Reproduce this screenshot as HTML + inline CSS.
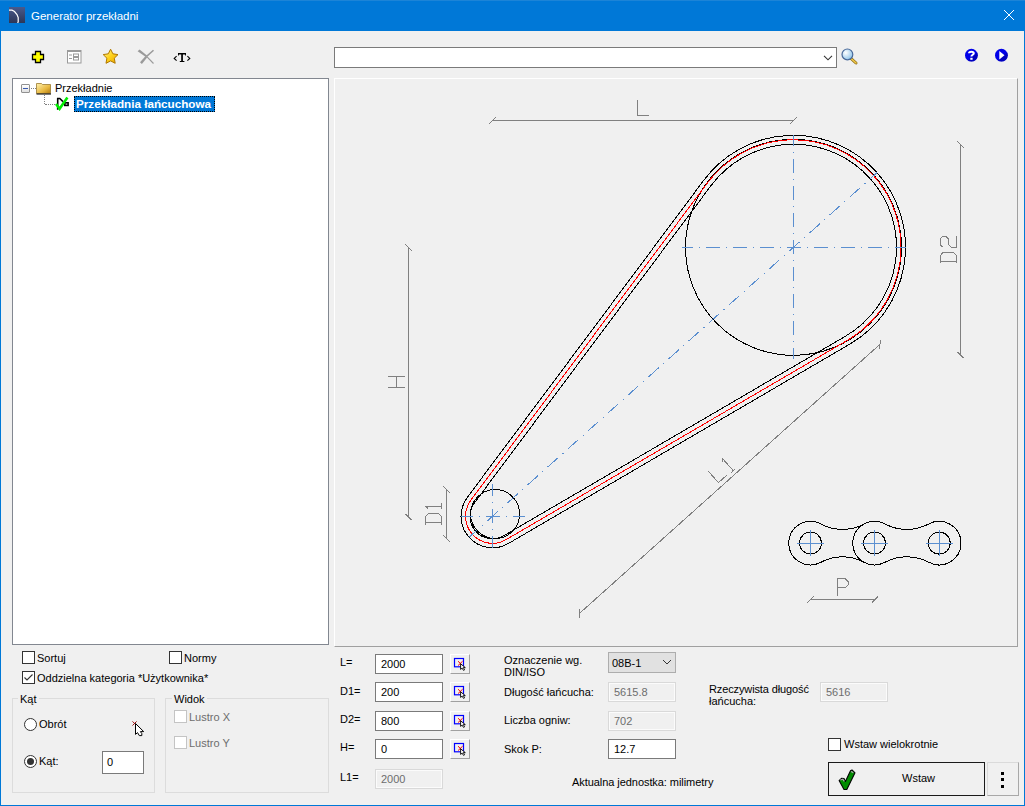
<!DOCTYPE html>
<html><head><meta charset="utf-8">
<style>
*{margin:0;padding:0;box-sizing:border-box}
html,body{width:1025px;height:806px;overflow:hidden;background:#f0f0f0}
body{position:relative;font-family:"Liberation Sans",sans-serif;font-size:11px;color:#000}
.a{position:absolute}
.t{position:absolute;font-size:11px;line-height:13px;white-space:nowrap}
.inp{position:absolute;background:#fff;border:1px solid #7a7a7a}
.dis{position:absolute;background:#f0f0f0;border:1px solid #d9d9d9}
.dis::after{content:"";position:absolute;left:0;top:0;right:0;bottom:0;border:1px solid #fbfbfb}
.cb{position:absolute;width:13px;height:13px;background:#fff;border:1px solid #333}
.pick{position:absolute;width:20px;height:20px;background:#f0f0f0;border:1px solid #fff;border-right-color:#a0a0a0;border-bottom-color:#a0a0a0}
.gray{color:#6d6d6d}
</style></head><body>
<!-- window frame -->
<div class="a" style="left:0;top:0;width:1025px;height:806px;border:1px solid #0078d7;border-top:none"></div>
<div class="a" style="left:0;top:0;width:1025px;height:31px;background:#0078d7"></div>
<div class="a" style="left:0;top:0;width:1025px;height:1px;background:#1c84d7"></div>
<!-- app icon -->
<svg class="a" style="left:9px;top:7px" width="16" height="16" viewBox="0 0 16 16">
<defs><linearGradient id="ig" x1="0" y1="0" x2="0" y2="1"><stop offset="0" stop-color="#4a5a8c"/><stop offset="1" stop-color="#2c3657"/></linearGradient></defs>
<rect width="16" height="16" fill="url(#ig)"/>
<path d="M0,3.2H3L5.5,4.5L8,7.5L9.2,10.5V15L8.5,15.8" fill="none" stroke="#fff" stroke-width="1.2"/>
</svg>
<div class="t" style="left:31px;top:9px;font-size:11.5px;line-height:14px;color:#fff">Generator przekładni</div>
<svg class="a" style="left:1003px;top:9px" width="12" height="12" viewBox="0 0 12 12"><path d="M1,1L11,11M11,1L1,11" stroke="#fff" stroke-width="1"/></svg>

<!-- toolbar -->
<svg class="a" style="left:31px;top:50px" width="15" height="15" viewBox="0 0 15 15">
<path d="M4.5,1.5H9.5V4.5H12.5V9.5H9.5V12.5H4.5V9.5H1.5V4.5H4.5Z" fill="#ffff00" stroke="#000" stroke-width="1.3"/>
</svg>
<svg class="a" style="left:67px;top:50px" width="15" height="14" viewBox="0 0 15 14">
<rect x="0.5" y="0.5" width="13.5" height="12.5" fill="#fff" stroke="#9a9a9a"/>
<rect x="0.5" y="0.5" width="13.5" height="1.5" fill="#9a9a9a"/>
<path d="M2,5H5M2,8.5H5" stroke="#9a9a9a"/>
<rect x="6.5" y="4" width="5" height="2.5" fill="none" stroke="#9a9a9a"/>
<rect x="6.5" y="7.5" width="5" height="2.5" fill="none" stroke="#9a9a9a"/>
</svg>
<svg class="a" style="left:102px;top:48px" width="18" height="17" viewBox="0 0 18 17">
<defs><linearGradient id="sg" x1="0" y1="0" x2="1" y2="1"><stop offset="0" stop-color="#fff7a0"/><stop offset="0.5" stop-color="#ffd21a"/><stop offset="1" stop-color="#e8a000"/></linearGradient></defs>
<path d="M8.6,1.2L10.9,5.8L16.0,6.6L12.3,10.2L13.2,15.3L8.6,12.9L4.0,15.3L4.9,10.2L1.2,6.6L6.3,5.8Z" fill="url(#sg)" stroke="#b07800" stroke-width="1"/>
</svg>
<svg class="a" style="left:137px;top:49px" width="18" height="16" viewBox="0 0 18 16">
<path d="M0.6,2.2L2.6,0.6L10.3,6.7L8.9,8.1Z" fill="#9a9a9a"/>
<path d="M3,13.2L4.9,15L10.3,8.2L8.8,6.7Z" fill="#9a9a9a"/>
<path d="M9.6,7.4L16.5,1.3" stroke="#9a9a9a" stroke-width="1.5"/>
<path d="M9.6,7.4L16.5,14.5" stroke="#9a9a9a" stroke-width="1.1"/>
</svg>
<svg class="a" style="left:172px;top:50px" width="20" height="14" viewBox="0 0 20 14">
<path d="M4.6,6.1L2.2,8.4L4.6,10.7M15.4,6.1L17.8,8.4L15.4,10.7" fill="none" stroke="#000" stroke-width="1.1"/>
<path d="M6,3H14V5.6H13.1V4.6H10.9V11.1H12.4V12H7.8V11.1H9.2V4.6H6.9V5.6H6Z" fill="#000"/>
</svg>

<div class="inp" style="left:334px;top:47px;width:503px;height:21px"></div>
<svg class="a" style="left:823px;top:55px" width="10" height="6" viewBox="0 0 10 6"><path d="M1,0.8L5,4.8L9,0.8" fill="none" stroke="#333" stroke-width="1.1"/></svg>
<svg class="a" style="left:840px;top:47px" width="19" height="19" viewBox="0 0 19 19">
<defs><radialGradient id="mg" cx="0.35" cy="0.35" r="0.7"><stop offset="0" stop-color="#ffffff"/><stop offset="1" stop-color="#8ec4ea"/></radialGradient></defs>
<path d="M11,11.5L16,16" stroke="#8a6a10" stroke-width="3" stroke-linecap="round"/>
<path d="M11,11.5L16,16" stroke="#f2c94c" stroke-width="1.6" stroke-linecap="round"/>
<circle cx="7.4" cy="7.4" r="5.4" fill="url(#mg)" stroke="#4a6a9a" stroke-width="1.2"/>
</svg>
<svg class="a" style="left:964px;top:48px" width="15" height="15" viewBox="0 0 15 15">
<circle cx="7.4" cy="7.2" r="6.4" fill="#0000e8"/><path d="M7.4,13.6A6.4,6.4 0 0 0 13.2,4.5L4,12.5Z" fill="#0000a0" opacity="0.6"/>
<path d="M5,5.2C5,3.2 9.8,3.2 9.8,5.2C9.8,6.8 7.4,6.8 7.4,8.6" fill="none" stroke="#fff" stroke-width="2"/>
<rect x="6.3" y="9.8" width="2.3" height="2" fill="#fff"/>
</svg>
<svg class="a" style="left:994px;top:48px" width="15" height="15" viewBox="0 0 15 15">
<circle cx="7.4" cy="7.2" r="6.4" fill="#0000e8"/><path d="M7.4,13.6A6.4,6.4 0 0 0 13.2,4.5L4,12.5Z" fill="#0000a0" opacity="0.6"/>
<path d="M5.3,3L10.5,7.2L5.3,11.4Z" fill="#fff"/>
</svg>

<!-- tree -->
<div class="a" style="left:12px;top:78px;width:317px;height:567px;background:#fff;border:1px solid #828790"></div>
<div class="a" style="left:21px;top:84px;width:9px;height:9px;border:1px solid #919191;border-radius:1px;background:linear-gradient(#fff,#e0e0e0)"></div>
<div class="a" style="left:23px;top:88px;width:5px;height:1px;background:#3a5ab0"></div>
<div class="a" style="left:31px;top:88px;width:5px;height:0;border-top:1px dotted #808080"></div>
<div class="a" style="left:44px;top:95px;width:0;height:9px;border-left:1px dotted #808080"></div>
<div class="a" style="left:45px;top:104px;width:10px;height:0;border-top:1px dotted #808080"></div>
<svg class="a" style="left:36px;top:82px" width="16" height="13" viewBox="0 0 16 13">
<defs><linearGradient id="fg" x1="0" y1="0" x2="1" y2="1"><stop offset="0" stop-color="#fff2b0"/><stop offset="0.6" stop-color="#e8b840"/><stop offset="1" stop-color="#b07a10"/></linearGradient></defs>
<path d="M0.5,1.5H5.5L6.5,2.5H14.5V11.5H0.5Z" fill="url(#fg)" stroke="#9a7a30" stroke-width="0.8"/>
<path d="M0.5,12H15" stroke="#222" stroke-width="1.2"/>
</svg>
<div class="t" style="left:55px;top:82px">Przekładnie</div>
<svg class="a" style="left:55px;top:96px" width="16" height="15" viewBox="0 0 16 15">
<path d="M2.7,2.3V13.8M2,2.5H4.8L8,5.6" fill="none" stroke="#000" stroke-width="1.6"/>
<rect x="9.8" y="6.8" width="3.3" height="2.6" fill="#fff" stroke="#000" stroke-width="1.6"/>
<path d="M1,7.9L4.6,12.8L12.4,1.6" fill="none" stroke="#00ee00" stroke-width="2.6"/>
</svg>
<div class="a" style="left:74px;top:96px;width:141px;height:16px;background:#0078d7;outline:1px dotted #000;outline-offset:-1px;border:1px dotted #ff9a2a"></div>
<div class="t" style="left:76px;top:97px;font-weight:bold;font-size:11.7px;line-height:14px;color:#fff">Przekładnia łańcuchowa</div>

<!-- drawing area -->
<div class="a" style="left:334px;top:78px;width:684px;height:569px;border:1px solid #fff;border-right-color:#a0a0a0;border-bottom-color:#a0a0a0"></div>
<svg width="1025" height="806" viewBox="0 0 1025 806" style="position:absolute;left:0;top:0" shape-rendering="crispEdges"><circle cx="495.1" cy="514" r="24.5" fill="none" stroke="#000"/>
<circle cx="793.5" cy="247.3" r="108" fill="none" stroke="#000"/>
<path d="M467.25,497.47 A31.5,31.5 0 0 0 508.39,543.50 L849.98,344.02 A112,112 0 1 0 703.71,180.35 Z" fill="none" stroke="#000"/>
<path d="M474.46,502.85 A22.5,22.5 0 0 0 503.85,535.73 L845.44,336.24 A103,103 0 1 0 710.93,185.73 Z" fill="none" stroke="#000"/>
<path d="M470.86,500.16 A27,27 0 0 0 506.12,539.62 L847.71,340.13 A107.5,107.5 0 1 0 707.32,183.04 Z" fill="none" stroke="#f00"/>
<line x1="460.50" y1="516.30" x2="524.50" y2="516.30" stroke="#5b8fd0" stroke-dasharray="14 6 1 6" stroke-dashoffset="2"/>
<line x1="492.50" y1="484.30" x2="492.50" y2="548.30" stroke="#5b8fd0" stroke-dasharray="14 6 1 6" stroke-dashoffset="2"/>
<line x1="681.50" y1="247.30" x2="905.50" y2="247.30" stroke="#5b8fd0" stroke-dasharray="14 6 1 6" stroke-dashoffset="3"/>
<line x1="793.50" y1="135.30" x2="793.50" y2="359.30" stroke="#5b8fd0" stroke-dasharray="14 6 1 6" stroke-dashoffset="3"/>
<line x1="469.39" y1="536.96" x2="877.01" y2="172.67" stroke="#5b8fd0" stroke-dasharray="14 6 1 6" stroke-dashoffset="3"/>
<g stroke="#808080" fill="none"><line x1="492.50" y1="120.50" x2="793.50" y2="120.50"/><line x1="489.39" y1="123.61" x2="495.61" y2="117.39"/><line x1="790.39" y1="123.61" x2="796.61" y2="117.39"/><line x1="960.50" y1="144.50" x2="960.50" y2="355.00"/><line x1="957.39" y1="141.39" x2="963.61" y2="147.61"/><line x1="957.39" y1="351.89" x2="963.61" y2="358.11"/><line x1="408.50" y1="247.40" x2="408.50" y2="516.90"/><line x1="405.39" y1="244.29" x2="411.61" y2="250.51"/><line x1="405.39" y1="513.79" x2="411.61" y2="520.01"/><line x1="446.50" y1="489.50" x2="446.50" y2="538.40"/><line x1="443.39" y1="486.39" x2="449.61" y2="492.61"/><line x1="443.39" y1="535.29" x2="449.61" y2="541.51"/><line x1="579.50" y1="613.40" x2="880.00" y2="344.30"/><line x1="579.26" y1="617.79" x2="579.74" y2="609.01"/><line x1="879.76" y1="348.69" x2="880.24" y2="339.91"/><line x1="810.50" y1="599.50" x2="875.00" y2="599.50"/><line x1="807.39" y1="602.61" x2="813.61" y2="596.39"/><line x1="871.89" y1="602.61" x2="878.11" y2="596.39"/><g transform="translate(637.5,100) rotate(0)"><path transform="translate(0,0)" d="M0,0V15.6H11.7"/></g><g transform="translate(940.2,263.4) rotate(-90)"><path transform="translate(0,0)" d="M0,0H7.6L10.8,2.7V13.6L7.8,16.5H0M2.2,0V16.5"/><path transform="translate(15.8,0)" d="M0.3,2.4L2.8,0.2H8.4L11.2,2.1V5.5L8.4,8.3H3.1L0.3,11.4V16.7H11.5"/></g><g transform="translate(387.9,387.4) rotate(-90)"><path transform="translate(0,0)" d="M0,0V16.9M11,0V16.9M0,8.7H11"/></g><g transform="translate(425.2,524.7) rotate(-90)"><path transform="translate(0,0)" d="M0,0H7.6L10.8,2.7V13.6L7.8,16.5H0M2.2,0V16.5"/><path transform="translate(16.1,0)" d="M2.6,0V16.5M0,16.5H5.6M2.6,0L0,3"/></g><g transform="translate(708.1,471) rotate(-41.84)"><path transform="translate(0,0)" d="M0,0V15.6H11.7"/><path transform="translate(16.4,0)" d="M2.6,0V16.5M0,16.5H5.6M2.6,0L0,3"/></g><g transform="translate(837.3,578.8) rotate(0)"><path transform="translate(0,0)" d="M0,16.8V0H7.9L11.4,3.5V5.7L7.9,8.8H0"/></g></g>
<path d="M820.87,523.93 A45.46,45.46 0 0 0 864.13,523.93 A21.8,21.8 0 1 1 864.13,562.27 A45.46,45.46 0 0 0 820.87,562.27 A21.8,21.8 0 1 1 820.87,523.93 Z" fill="#f0f0f0" stroke="#000"/><path d="M884.77,523.87 A46.85,46.85 0 0 0 928.93,523.87 A21.8,21.8 0 1 1 928.93,562.33 A46.85,46.85 0 0 0 884.77,562.33 A21.8,21.8 0 1 1 884.77,523.87 Z" fill="#f0f0f0" stroke="#000"/><circle cx="810.5" cy="543.1" r="11" fill="none" stroke="#000"/><path d="M797.0,543.1H824.0M810.5,530.4V555.8000000000001" stroke="#5b8fd0"/><circle cx="874.5" cy="543.1" r="11" fill="none" stroke="#000"/><path d="M861.0,543.1H888.0M874.5,530.4V555.8000000000001" stroke="#5b8fd0"/><circle cx="939.2" cy="543.1" r="11" fill="none" stroke="#000"/><path d="M925.7,543.1H952.7M939.2,530.4V555.8000000000001" stroke="#5b8fd0"/></svg>

<!-- bottom left -->
<div class="cb" style="left:22px;top:651px"></div><div class="t" style="left:37px;top:652px">Sortuj</div>
<div class="cb" style="left:169px;top:651px"></div><div class="t" style="left:184px;top:652px">Normy</div>
<div class="cb" style="left:22px;top:671px"></div>
<svg class="a" style="left:22px;top:671px" width="13" height="13" viewBox="0 0 13 13"><path d="M2.5,6.5L5,9L10.5,3.5" fill="none" stroke="#333" stroke-width="1.1"/></svg>
<div class="t" style="left:37px;top:672px">Oddzielna kategoria *Użytkownika*</div>

<div class="a" style="left:12px;top:698px;width:143px;height:95px;border:1px solid #dcdcdc"></div>
<div class="t" style="left:18px;top:693px;padding:0 2px;background:#f0f0f0">Kąt</div>
<div class="a" style="left:24px;top:718px;width:13px;height:13px;border-radius:50%;border:1px solid #333;background:#fff"></div>
<div class="t" style="left:39px;top:718px">Obrót</div>
<div class="a" style="left:24px;top:755px;width:13px;height:13px;border-radius:50%;border:1px solid #333;background:#fff"></div>
<div class="a" style="left:27px;top:758px;width:7px;height:7px;border-radius:50%;background:#333"></div>
<div class="t" style="left:39px;top:755px">Kąt:</div>
<div class="inp" style="left:102px;top:751px;width:42px;height:23px"></div>
<div class="t" style="left:107px;top:756px">0</div>
<svg class="a" style="left:131px;top:719px" width="15" height="19" viewBox="0 0 15 19">
<path d="M1.5,2.4L5.6,6.5M5.6,2.4L1.5,6.5" stroke="#a01010" stroke-width="1"/>
<path d="M4.5,4.5V15.4L6.5,13.6L8.3,16.6H10.8V14.6L9.4,12.6H12.7Z" fill="#fff" stroke="#000" stroke-width="1" stroke-linejoin="miter"/>
</svg>

<div class="a" style="left:165px;top:698px;width:164px;height:95px;border:1px solid #dcdcdc"></div>
<div class="t" style="left:172px;top:693px;padding:0 2px;background:#f0f0f0">Widok</div>
<div class="cb" style="left:174px;top:710px;border-color:#c4c4c4"></div><div class="t gray" style="left:189px;top:711px">Lustro X</div>
<div class="cb" style="left:174px;top:736px;border-color:#c4c4c4"></div><div class="t gray" style="left:189px;top:737px">Lustro Y</div>

<!-- form column 1 -->
<div class="t" style="left:340px;top:656px">L=</div>
<div class="inp" style="left:375px;top:654px;width:68px;height:20px"></div><div class="t" style="left:381px;top:658px">2000</div>
<div class="t" style="left:340px;top:685px">D1=</div>
<div class="inp" style="left:375px;top:682px;width:68px;height:20px"></div><div class="t" style="left:381px;top:686px">200</div>
<div class="t" style="left:340px;top:713px">D2=</div>
<div class="inp" style="left:375px;top:711px;width:68px;height:20px"></div><div class="t" style="left:381px;top:715px">800</div>
<div class="t" style="left:340px;top:741px">H=</div>
<div class="inp" style="left:375px;top:739px;width:68px;height:20px"></div><div class="t" style="left:381px;top:743px">0</div>
<div class="t" style="left:340px;top:771px">L1=</div>
<div class="dis" style="left:375px;top:769px;width:68px;height:20px"></div><div class="t gray" style="left:381px;top:773px">2000</div>

<div class="pick" style="left:450px;top:654px"></div><svg class="a" style="left:453px;top:657px" width="14" height="14" viewBox="0 0 14 14"><rect x="1.5" y="1.5" width="9" height="8.3" fill="none" stroke="#0000ff" stroke-width="1.2"/><path d="M5,4.2L9.6,8.6M9.6,4.2L5,8.6" stroke="#ff0000" stroke-width="1"/><path d="M7.6,6.8V12.4L9.1,11.1L10.5,13.4L11.6,12.8L10.3,10.6H12.3Z" fill="#fff" stroke="#000" stroke-width="0.9" stroke-linejoin="round"/></svg><div class="pick" style="left:450px;top:682px"></div><svg class="a" style="left:453px;top:685px" width="14" height="14" viewBox="0 0 14 14"><rect x="1.5" y="1.5" width="9" height="8.3" fill="none" stroke="#0000ff" stroke-width="1.2"/><path d="M5,4.2L9.6,8.6M9.6,4.2L5,8.6" stroke="#ff0000" stroke-width="1"/><path d="M7.6,6.8V12.4L9.1,11.1L10.5,13.4L11.6,12.8L10.3,10.6H12.3Z" fill="#fff" stroke="#000" stroke-width="0.9" stroke-linejoin="round"/></svg><div class="pick" style="left:450px;top:711px"></div><svg class="a" style="left:453px;top:714px" width="14" height="14" viewBox="0 0 14 14"><rect x="1.5" y="1.5" width="9" height="8.3" fill="none" stroke="#0000ff" stroke-width="1.2"/><path d="M5,4.2L9.6,8.6M9.6,4.2L5,8.6" stroke="#ff0000" stroke-width="1"/><path d="M7.6,6.8V12.4L9.1,11.1L10.5,13.4L11.6,12.8L10.3,10.6H12.3Z" fill="#fff" stroke="#000" stroke-width="0.9" stroke-linejoin="round"/></svg><div class="pick" style="left:450px;top:739px"></div><svg class="a" style="left:453px;top:742px" width="14" height="14" viewBox="0 0 14 14"><rect x="1.5" y="1.5" width="9" height="8.3" fill="none" stroke="#0000ff" stroke-width="1.2"/><path d="M5,4.2L9.6,8.6M9.6,4.2L5,8.6" stroke="#ff0000" stroke-width="1"/><path d="M7.6,6.8V12.4L9.1,11.1L10.5,13.4L11.6,12.8L10.3,10.6H12.3Z" fill="#fff" stroke="#000" stroke-width="0.9" stroke-linejoin="round"/></svg>

<!-- form column 2 -->
<div class="t" style="left:504px;top:654px">Oznaczenie wg.</div>
<div class="t" style="left:504px;top:666px">DIN/ISO</div>
<div class="a" style="left:608px;top:652px;width:68px;height:21px;background:#e1e1e1;border:1px solid #adadad"></div>
<div class="t" style="left:612px;top:657px">08B-1</div>
<svg class="a" style="left:662px;top:659px" width="10" height="7" viewBox="0 0 10 7"><path d="M1,1L5,5L9,1" fill="none" stroke="#333" stroke-width="1"/></svg>
<div class="t" style="left:504px;top:686px">Długość łańcucha:</div>
<div class="dis" style="left:608px;top:682px;width:68px;height:20px"></div><div class="t gray" style="left:614px;top:686px">5615.8</div>
<div class="t" style="left:504px;top:714px">Liczba ogniw:</div>
<div class="dis" style="left:608px;top:711px;width:68px;height:20px"></div><div class="t gray" style="left:614px;top:715px">702</div>
<div class="t" style="left:504px;top:743px">Skok P:</div>
<div class="inp" style="left:608px;top:739px;width:68px;height:20px"></div><div class="t" style="left:614px;top:743px">12.7</div>
<div class="t" style="left:572px;top:776px;letter-spacing:-0.06px">Aktualna jednostka: milimetry</div>

<!-- right column -->
<div class="t" style="left:709px;top:683px;letter-spacing:-0.12px">Rzeczywista długość</div>
<div class="t" style="left:709px;top:695px">łańcucha:</div>
<div class="dis" style="left:820px;top:682px;width:68px;height:20px"></div><div class="t gray" style="left:826px;top:686px">5616</div>
<div class="cb" style="left:828px;top:738px"></div><div class="t" style="left:844px;top:738px">Wstaw wielokrotnie</div>
<div class="a" style="left:828px;top:762px;width:157px;height:34px;background:#f0f0f0;border:1px solid #1a1a1a"></div>
<svg class="a" style="left:837px;top:768px" width="20" height="24" viewBox="0 0 20 24">
<path d="M2.1,12.6L4.5,10.3L7,10.5L8.4,13.5L13.5,2.8L15,2L18,4.8L9.8,21.5L7,21.5Z" fill="#008c00" stroke="#000" stroke-width="1.1" stroke-linejoin="round"/>
<path d="M3.3,12L5.8,11.2L7.3,13.3M14,3.5L16.3,4.6" fill="none" stroke="#b0a8b0" stroke-width="1.2"/>
</svg>
<div class="t" style="left:902px;top:772px">Wstaw</div>
<div class="a" style="left:987px;top:762px;width:32px;height:34px;background:#f0f0f0;border:1px solid #dadada;border-right-color:#a8a8a8;border-bottom-color:#a8a8a8"></div>
<div class="a" style="left:1001px;top:772px;width:3px;height:3px;background:#000"></div>
<div class="a" style="left:1001px;top:778px;width:3px;height:3px;background:#000"></div>
<div class="a" style="left:1001px;top:785px;width:3px;height:3px;background:#000"></div>
</body></html>
